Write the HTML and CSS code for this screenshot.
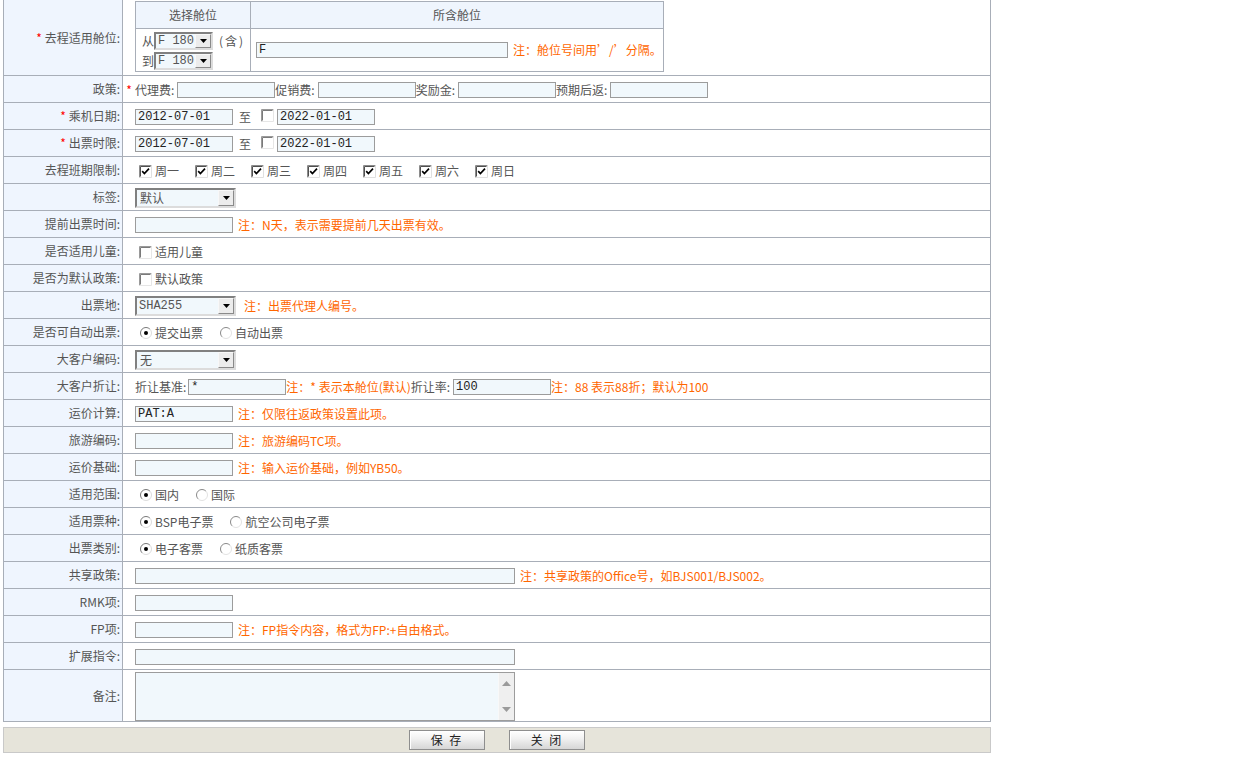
FILE: index.html
```html
<!DOCTYPE html>
<html lang="zh-CN">
<head>
<meta charset="utf-8">
<title>政策编辑</title>
<link rel="stylesheet" href="styles.css">
</head>
<body>
<svg class="defs" width="0" height="0" aria-hidden="true">
  <symbol id="ckon" viewBox="0 0 13 13">
    <rect x="0" y="0" width="13" height="13" fill="#fff"/>
    <path d="M0.5 12.5V0.5H12.5" stroke="#8c8c8c" fill="none"/>
    <path d="M1.5 11.5V1.5H11.5" stroke="#505050" fill="none"/>
    <path d="M12.5 0.5V12.5H0.5" stroke="#e0e0e0" fill="none"/>
    <path d="M3.2 6.2l2.2 2.3 4.6-4.8" stroke="#000" stroke-width="1.7" fill="none"/>
  </symbol>
  <symbol id="ckoff" viewBox="0 0 13 13">
    <rect x="0" y="0" width="13" height="13" fill="#fff"/>
    <path d="M0.5 12.5V0.5H12.5" stroke="#9a9a9a" fill="none"/>
    <path d="M1.5 11.5V1.5H11.5" stroke="#7a7a7a" fill="none"/>
    <path d="M12.5 0.5V12.5H0.5" stroke="#e6e6e6" fill="none"/>
  </symbol>
  <symbol id="rdon" viewBox="0 0 12 12">
    <circle cx="6" cy="6" r="5.5" fill="#fff"/>
    <path d="M2.1 9.9A5.5 5.5 0 0 1 9.9 2.1" stroke="#7a7a7a" fill="none"/>
    <path d="M9.9 2.1A5.5 5.5 0 0 1 2.1 9.9" stroke="#dcdcdc" fill="none"/>
    <circle cx="6" cy="6" r="2" fill="#000"/>
  </symbol>
  <symbol id="rdoff" viewBox="0 0 12 12">
    <circle cx="6" cy="6" r="5.5" fill="#fff"/>
    <path d="M2.1 9.9A5.5 5.5 0 0 1 9.9 2.1" stroke="#8a8a8a" fill="none"/>
    <path d="M9.9 2.1A5.5 5.5 0 0 1 2.1 9.9" stroke="#e2e2e2" fill="none"/>
  </symbol>
  <symbol id="tri" viewBox="0 0 7 4">
    <polygon points="0,0 7,0 3.5,4" fill="#000"/>
  </symbol>
</svg>

<div class="form">
  <div class="lbl h75"><span class="req">*</span>&nbsp;去程适用舱位:</div>
  <div class="val h75 first">
    <div class="cabin">
      <div class="ch">选择舱位</div>
      <div class="ch">所含舱位</div>
      <div class="cb1">
        <div class="rline">从<span class="sel s59"><span class="sv">F 180</span><span class="sb"><svg width="7" height="4"><use href="#tri"/></svg></span></span><span class="han">(含)</span></div>
        <div class="rline">到<span class="sel s59"><span class="sv">F 180</span><span class="sb"><svg width="7" height="4"><use href="#tri"/></svg></span></span></div>
      </div>
      <div class="cb2"><input class="inp w252" value="F"><span class="note">注：舱位号间用’/’分隔。</span></div>
    </div>
  </div>

  <div class="lbl">政策:</div>
  <div class="val nopad"><span class="req star">*</span>代理费:<input class="inp w98 ml3"><span>促销费:</span><input class="inp w98 ml3">奖励金:<input class="inp w98 ml3">预期后返:<input class="inp w98 ml3"></div>

  <div class="lbl"><span class="req">*</span>&nbsp;乘机日期:</div>
  <div class="val"><input class="inp w98" value="2012-07-01"><span class="to">至</span><svg class="cb ckd"><use href="#ckoff"/></svg><input class="inp w98" value="2022-01-01"></div>

  <div class="lbl"><span class="req">*</span>&nbsp;出票时限:</div>
  <div class="val"><input class="inp w98" value="2012-07-01"><span class="to">至</span><svg class="cb ckd"><use href="#ckoff"/></svg><input class="inp w98" value="2022-01-01"></div>

  <div class="lbl">去程班期限制:</div>
  <div class="val">
    <label class="opt"><svg class="cb"><use href="#ckon"/></svg>周一</label>
    <label class="opt"><svg class="cb"><use href="#ckon"/></svg>周二</label>
    <label class="opt"><svg class="cb"><use href="#ckon"/></svg>周三</label>
    <label class="opt"><svg class="cb"><use href="#ckon"/></svg>周四</label>
    <label class="opt"><svg class="cb"><use href="#ckon"/></svg>周五</label>
    <label class="opt"><svg class="cb"><use href="#ckon"/></svg>周六</label>
    <label class="opt"><svg class="cb"><use href="#ckon"/></svg>周日</label>
  </div>

  <div class="lbl">标签:</div>
  <div class="val"><span class="sel s101"><span class="sv cjk">默认</span><span class="sb"><svg width="7" height="4"><use href="#tri"/></svg></span></span></div>

  <div class="lbl">提前出票时间:</div>
  <div class="val"><input class="inp w98"><span class="note">注：N天，表示需要提前几天出票有效。</span></div>

  <div class="lbl">是否适用儿童:</div>
  <div class="val"><label class="opt"><svg class="cb"><use href="#ckoff"/></svg>适用儿童</label></div>

  <div class="lbl">是否为默认政策:</div>
  <div class="val"><label class="opt"><svg class="cb"><use href="#ckoff"/></svg>默认政策</label></div>

  <div class="lbl">出票地:</div>
  <div class="val"><span class="sel s101"><span class="sv">SHA255</span><span class="sb"><svg width="7" height="4"><use href="#tri"/></svg></span></span><span class="note n8">注：出票代理人编号。</span></div>

  <div class="lbl">是否可自动出票:</div>
  <div class="val">
    <label class="opt"><svg class="rd"><use href="#rdon"/></svg>提交出票</label>
    <label class="opt"><svg class="rd"><use href="#rdoff"/></svg>自动出票</label>
  </div>

  <div class="lbl">大客户编码:</div>
  <div class="val"><span class="sel s101"><span class="sv cjk">无</span><span class="sb"><svg width="7" height="4"><use href="#tri"/></svg></span></span></div>

  <div class="lbl">大客户折让:</div>
  <div class="val">折让基准:<input class="inp w98 ml2" value="*"><span class="note n0">注：* 表示本舱位(默认)</span>折让率:<input class="inp w98 ml3" value="100"><span class="note n0">注：88 表示88折；默认为100</span></div>

  <div class="lbl">运价计算:</div>
  <div class="val"><input class="inp w98" value="PAT:A"><span class="note">注：仅限往返政策设置此项。</span></div>

  <div class="lbl">旅游编码:</div>
  <div class="val"><input class="inp w98"><span class="note">注：旅游编码TC项。</span></div>

  <div class="lbl">运价基础:</div>
  <div class="val"><input class="inp w98"><span class="note">注：输入运价基础，例如YB50。</span></div>

  <div class="lbl">适用范围:</div>
  <div class="val">
    <label class="opt"><svg class="rd"><use href="#rdon"/></svg>国内</label>
    <label class="opt"><svg class="rd"><use href="#rdoff"/></svg>国际</label>
  </div>

  <div class="lbl">适用票种:</div>
  <div class="val">
    <label class="opt"><svg class="rd"><use href="#rdon"/></svg>BSP电子票</label>
    <label class="opt"><svg class="rd"><use href="#rdoff"/></svg>航空公司电子票</label>
  </div>

  <div class="lbl">出票类别:</div>
  <div class="val">
    <label class="opt"><svg class="rd"><use href="#rdon"/></svg>电子客票</label>
    <label class="opt"><svg class="rd"><use href="#rdoff"/></svg>纸质客票</label>
  </div>

  <div class="lbl">共享政策:</div>
  <div class="val"><input class="inp w380"><span class="note">注：共享政策的Office号，如BJS001/BJS002。</span></div>

  <div class="lbl">RMK项:</div>
  <div class="val"><input class="inp w98"></div>

  <div class="lbl">FP项:</div>
  <div class="val"><input class="inp w98"><span class="note">注：FP指令内容，格式为FP:+自由格式。</span></div>

  <div class="lbl">扩展指令:</div>
  <div class="val"><input class="inp w380"></div>

  <div class="lbl h51">备注:</div>
  <div class="val h51">
    <div class="ta">
      <textarea></textarea>
      <div class="scroll">
        <svg width="9" height="5"><polygon points="0,5 9,5 4.5,0" fill="#9a9a9a"/></svg>
        <svg width="9" height="5"><polygon points="0,0 9,0 4.5,5" fill="#9a9a9a"/></svg>
      </div>
    </div>
  </div>
</div>

<div class="footer">
  <button class="btn" type="button">保 存</button>
  <button class="btn" type="button">关 闭</button>
</div>
</body>
</html>
```

FILE: styles.css
```css
* { box-sizing: border-box; }

body {
  margin: 0;
  font: 12px/16px "Noto Sans CJK SC", "Noto Sans", sans-serif;
  color: #555;
  background: #fff;
}

.defs { position: absolute; width: 0; height: 0; overflow: hidden; }

.form {
  display: grid;
  grid-template-columns: 118px 867px;
  gap: 1px;
  width: max-content;
  margin-left: 3px;
  background: #a8aeb8;
  border: 1px solid #a8aeb8;
  border-top: 0;
}

.lbl {
  height: 26px;
  background: #eff5fe;
  display: flex;
  align-items: center;
  justify-content: flex-end;
  padding-right: 2px;
  white-space: nowrap;
}

.val {
  height: 26px;
  background: #fff;
  display: flex;
  align-items: center;
  padding: 2px 0 0 12px;
  white-space: nowrap;
}

.val.nopad { padding-left: 0; }
.val.first { align-items: flex-start; padding-top: 1px; }

.h75 { height: 75px; }
.h51 { height: 51px; }

.req { color: #f00; }
.star { display: inline-block; width: 12px; text-align: center; }

/* inner cabin table */
.cabin {
  display: grid;
  grid-template-columns: 114px 412px;
  grid-template-rows: 26px 42px;
  gap: 1px;
  background: #a8aeb8;
  border: 1px solid #a8aeb8;
}

.ch {
  background: #eff5fd;
  display: flex;
  align-items: center;
  justify-content: center;
}

.cb1 {
  background: #fff;
  padding: 3px 0 0 6px;
  display: flex;
  flex-direction: column;
  gap: 2px;
}

.rline { display: flex; align-items: center; height: 18px; }
.han { margin-left: 6px; letter-spacing: 2px; }

.cb2 {
  background: #fff;
  display: flex;
  align-items: center;
  padding-left: 5px;
}

/* inputs */
.inp {
  height: 16px;
  border: 1px solid #9c9c9c;
  background: #f1f8fc;
  font: 12px/14px "Liberation Mono", monospace;
  color: #222;
  padding: 0 2px;
  margin: 0;
  outline: none;
}

.w98 { width: 98px; }
.w252 { width: 252px; }
.w380 { width: 380px; }
.ml2 { margin-left: 2px; }
.ml3 { margin-left: 3px; }

.note { color: #f60; margin-left: 5px; }
.note.n8 { margin-left: 8px; }
.note.n0 { margin-left: 0; }

.to { margin: 0 10px 0 6px; }

/* checkboxes & radios */
.cb { width: 13px; height: 13px; flex: none; }
.ckd { margin-right: 3px; align-self: flex-start; margin-top: 4px; }
.rd { width: 12px; height: 12px; flex: none; margin-left: 1px; margin-right: 3px; }

.opt {
  display: flex;
  align-items: center;
  margin: 0 12px 0 4px;
}

.opt .cb { margin-right: 3px; }

/* selects */
.sel {
  display: inline-flex;
  height: 20px;
  border: 2px solid;
  border-color: #808080 #dcdcdc #dcdcdc #808080;
  background: #f1f8fc;
  flex: none;
}

.s59 { width: 59px; height: 18px; }
.s101 { width: 101px; }

.sv {
  flex: 1;
  padding-left: 2px;
  font: 12px/16px "Liberation Mono", monospace;
  color: #555;
  overflow: hidden;
}

.sv.cjk { font-family: "Noto Sans CJK SC", sans-serif; padding-left: 3px; }

.s59 .sv { line-height: 14px; }

.sb {
  width: 16px;
  flex: none;
  background: #ececec;
  border: 1px solid;
  border-color: #f8f8f8 #8a8a8a #8a8a8a #f8f8f8;
  display: flex;
  align-items: center;
  justify-content: center;
}

/* textarea */
.ta {
  display: flex;
  width: 380px;
  height: 49px;
  border: 1px solid #9c9c9c;
  background: #f1f8fc;
  margin-top: -1px;
}

.ta textarea {
  flex: 1;
  border: 0;
  background: transparent;
  resize: none;
  outline: none;
  margin: 0;
}

.scroll {
  width: 16px;
  background: #efefef;
  border-left: 1px solid #f8f8f8;
  display: flex;
  flex-direction: column;
  align-items: center;
  justify-content: space-between;
  padding: 8px 0 8px;
}

/* footer */
.footer {
  margin: 5px 0 0 3px;
  width: 988px;
  height: 26px;
  background: #e6e4da;
  border: 1px solid #c9c9c9;
  display: flex;
  align-items: center;
  justify-content: center;
  gap: 24px;
}

.btn {
  width: 76px;
  height: 20px;
  border: 1px solid #8e8e8e;
  background: linear-gradient(#ffffff, #f2f2f2 40%, #d6d6d6);
  box-shadow: inset 1px 1px 0 #fff;
  font: 12px/16px "Noto Sans CJK SC", sans-serif;
  color: #222;
  letter-spacing: 2px;
  padding: 0;
  margin: 0;
}
```
